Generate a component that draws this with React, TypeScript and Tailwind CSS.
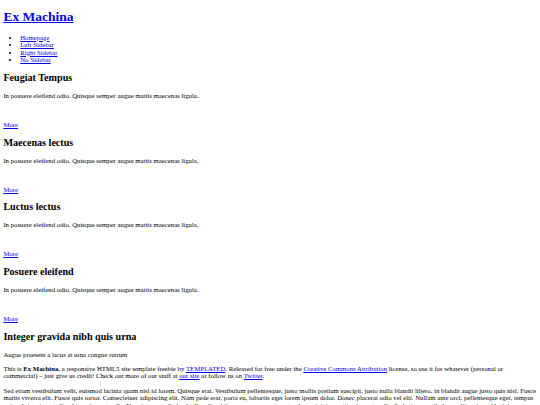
import React from "react";

const navLinks = ["Homepage", "Left Sidebar", "Right Sidebar", "No Sidebar"];

const features = [
  { title: "Feugiat Tempus" },
  { title: "Maecenas lectus" },
  { title: "Luctus lectus" },
  { title: "Posuere eleifend" },
];

const link = "text-[#0000ee] underline";

export default function App() {
  return (
    <div className="min-h-[405px] bg-white px-[3.375px] text-[6.75px] leading-[7.6px] text-black font-['Liberation_Serif',serif]">
      {/* Header */}
      <h1 className="my-[9.05px] text-[13.5px] leading-[15.5px] font-bold">
        <a href="#" className={link}>
          Ex Machina
        </a>
      </h1>

      <ul className="my-[6.75px] list-disc pl-[16.875px]">
        {navLinks.map((label) => (
          <li key={label}>
            <a href="#" className={link}>
              {label}
            </a>
          </li>
        ))}
      </ul>

      {/* Feature boxes */}
      {features.map((f) => (
        <section key={f.title}>
          <h2 className="my-[8.4px] text-[10.125px] leading-[11.5px] font-bold">{f.title}</h2>
          <p className="my-[6.75px]">
            In posuere eleifend odio. Quisque semper augue mattis maecenas ligula.
          </p>
          <div className="h-[7.6px]" />
          <p className="my-[6.75px]">
            <a href="#" className={link}>
              More
            </a>
          </p>
        </section>
      ))}

      {/* Main content */}
      <article>
        <h2 className="my-[8.4px] text-[10.125px] leading-[11.5px] font-bold">
          Integer gravida nibh quis urna
        </h2>
        <p className="my-[6.75px]">Augue praesent a lacus at urna congue rutrum</p>
        <p className="my-[6.75px]">
          This is <strong>Ex Machina</strong>, a responsive HTML5 site template freebie by{" "}
          <a href="#" className={link}>
            TEMPLATED
          </a>
          . Released for free under the{" "}
          <a href="#" className={link}>
            Creative Commons Attribution
          </a>{" "}
          license, so use it for whatever (personal or commercial) – just give us credit! Check out
          more of our stuff at{" "}
          <a href="#" className={link}>
            our site
          </a>{" "}
          or follow us on{" "}
          <a href="#" className={link}>
            Twitter
          </a>
          .
        </p>
        <p className="my-[6.75px]">
          Sed etiam vestibulum velit, euismod lacinia quam nisl id lorem. Quisque erat. Vestibulum
          pellentesque, justo mollis pretium suscipit, justo nulla blandit libero, in blandit augue
          justo quis nisl. Fusce mattis viverra elit. Fusce quis tortor. Consectetuer adipiscing
          elit. Nam pede erat, porta eu, lobortis eget lorem ipsum dolor. Donec placerat odio vel
          elit. Nullam ante orci, pellentesque eget, tempus quis, ultrices in, est. Curabitur sit
          amet nulla. Nam in massa. Sed vel tellus. Curabitur sem urna, consequat vel, suscipit in,
          mattis placerat, nulla. Sed etiam vestibulum velit, euismod lacinia quam nisl id lorem.
          Quisque erat.
        </p>
      </article>
    </div>
  );
}
